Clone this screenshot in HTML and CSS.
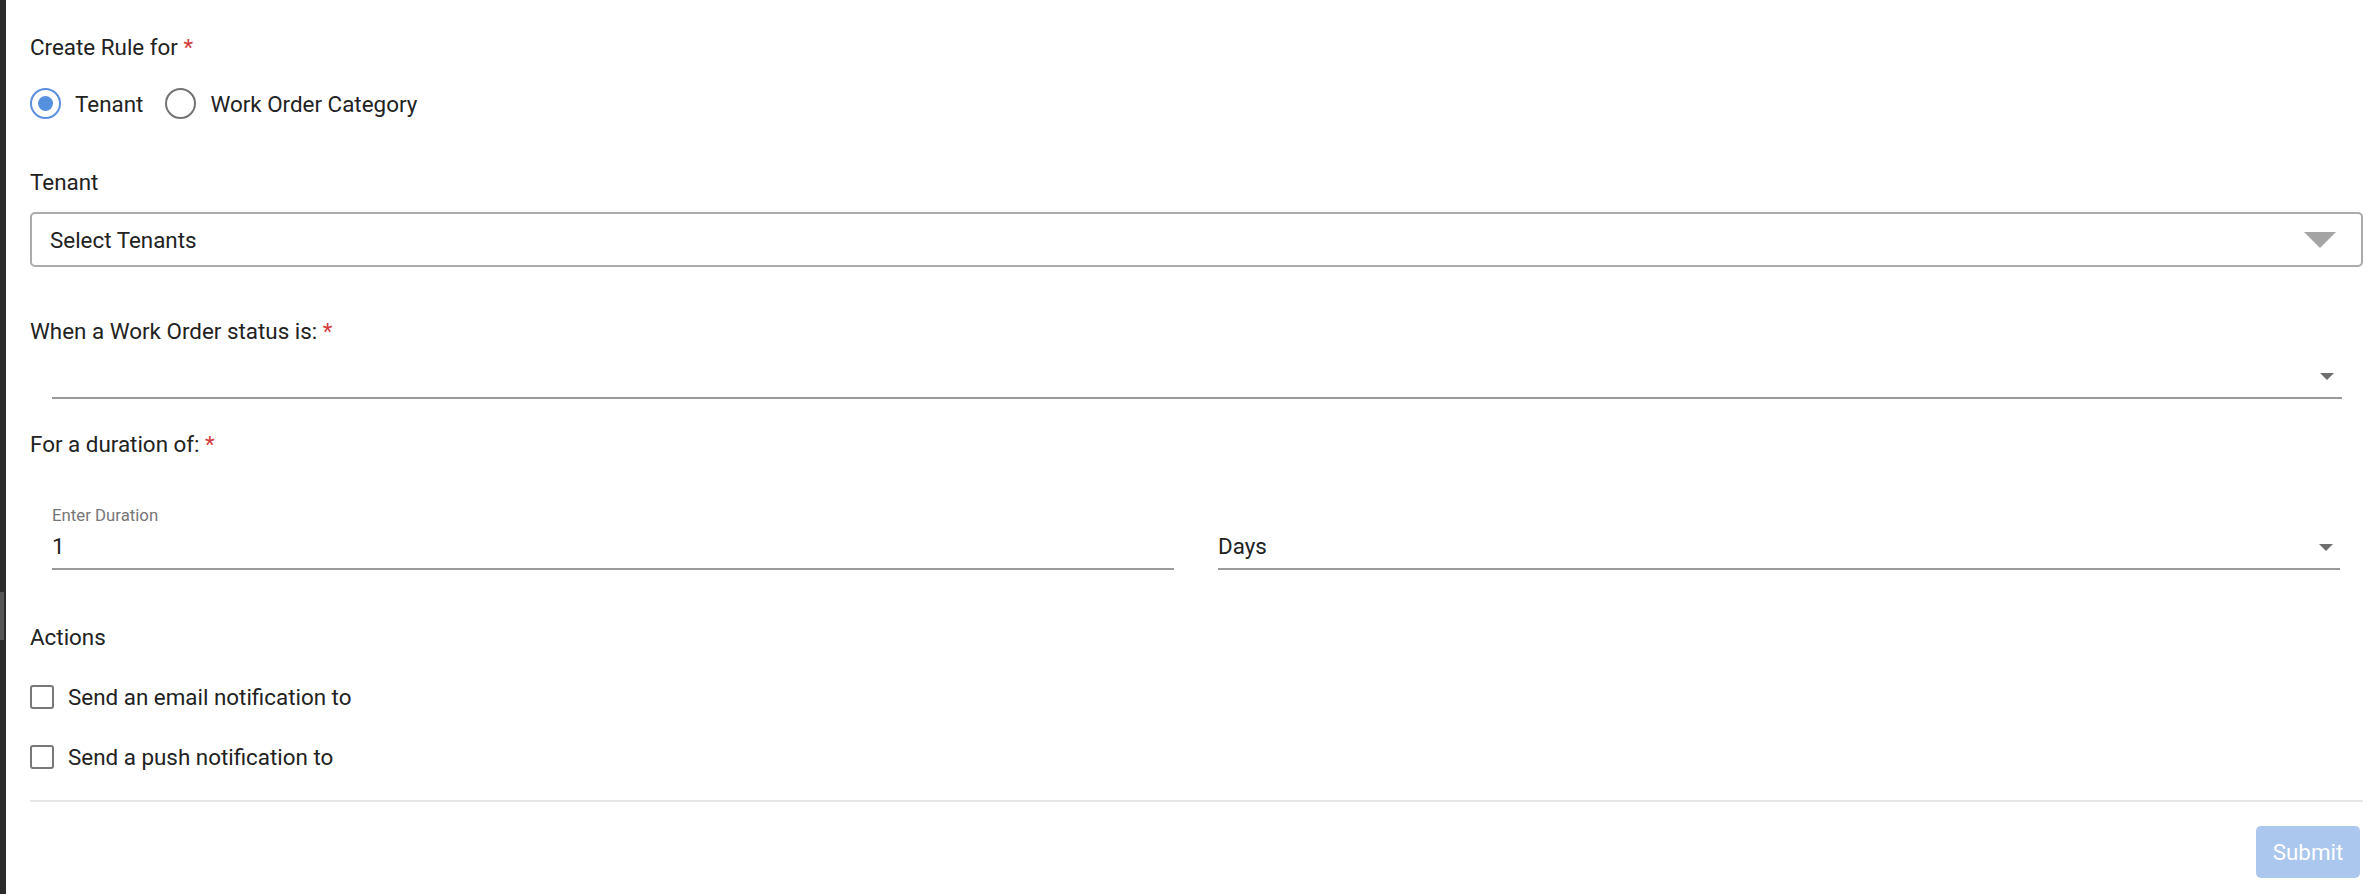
FILE: index.html
```html
<!DOCTYPE html>
<html lang="en">
<head>
<meta charset="utf-8">
<title>Create Rule</title>
<link rel="stylesheet" href="styles.css">
</head>
<body>
<div class="page">
  <aside class="strip"><div class="thumb"></div></aside>
  <main class="form">
    <div class="label">Create Rule for <span class="req">*</span></div>
    <div class="radio-row">
      <label class="radio-opt"><span class="radio checked"></span><span>Tenant</span></label>
      <label class="radio-opt"><span class="radio"></span><span>Work Order Category</span></label>
    </div>

    <div class="label sec-tenant">Tenant</div>
    <div class="select-box">
      <span>Select Tenants</span>
      <span class="tri-big"></span>
    </div>

    <div class="label sec-when">When a Work Order status is: <span class="req">*</span></div>
    <div class="under-field status-field">
      <span class="tri-small"></span>
    </div>

    <div class="label sec-dur">For a duration of: <span class="req">*</span></div>
    <div class="dur-row">
      <div class="under-field dur-field">
        <div class="small-label">Enter Duration</div>
        <div class="value">1</div>
      </div>
      <div class="under-field dur-field days-field">
        <div class="value">Days</div>
        <span class="tri-small"></span>
      </div>
    </div>

    <div class="label sec-actions">Actions</div>
    <label class="check-row first"><span class="checkbox"></span><span>Send an email notification to</span></label>
    <label class="check-row"><span class="checkbox"></span><span>Send a push notification to</span></label>

    <div class="divider"></div>
    <div class="footer">
      <button class="submit" type="button">Submit</button>
    </div>
  </main>
</div>
</body>
</html>
```

FILE: styles.css
```css
* { box-sizing: border-box; }
html, body { margin: 0; padding: 0; background: #fff; }
body {
  font-family: Roboto, "Liberation Sans", Arial, sans-serif;
  font-size: 22.4px;
  line-height: 26px;
  color: #222;
}
.page { display: flex; min-height: 894px; }
.strip { width: 6px; background: #2b2b2b; padding-top: 592px; flex: none; }
.thumb { width: 4px; height: 48px; background: #555; }

.form { flex: 1; padding: 34px 13px 0 24px; }

.label { height: 26px; }
.req { color: #d23c3c; }

.radio-row { display: flex; margin-top: 28px; height: 31px; align-items: center; gap: 22px; }
.radio-opt { display: flex; align-items: center; gap: 14px; }
.radio {
  width: 31px; height: 31px; border-radius: 50%;
  border: 2px solid #737373;
  display: flex; align-items: center; justify-content: center;
}
.radio.checked { border-color: #5a8fdf; }
.radio.checked::after {
  content: ""; width: 15px; height: 15px; border-radius: 50%; background: #5590df;
}

.sec-tenant { margin-top: 50px; }
.select-box {
  margin-top: 17px; height: 55px;
  border: 2px solid #ababab; border-radius: 5px;
  display: flex; align-items: center; justify-content: space-between;
  padding: 0 25px 0 18px;
}
.tri-big {
  width: 0; height: 0;
  border-left: 16px solid transparent; border-right: 16px solid transparent;
  border-top: 16px solid #a4a4a4;
}

.sec-when { margin-top: 51px; }
.under-field { border-bottom: 2px solid #9a9a9a; }
.status-field {
  margin: 0 21px 0 22px; height: 55px;
  display: flex; justify-content: flex-end; align-items: flex-end;
  padding: 0 8px 17px 0;
}
.tri-small {
  width: 0; height: 0;
  border-left: 7px solid transparent; border-right: 7px solid transparent;
  border-top: 7px solid #6f6f6f;
}

.sec-dur { margin-top: 32px; }
.dur-row {
  display: grid; grid-template-columns: 1fr 1fr; column-gap: 44px;
  padding: 0 23px 0 22px; margin-top: 49px;
}
.dur-field { padding-bottom: 9px; }
.small-label { font-size: 16.8px; line-height: 18px; color: #767676; margin-bottom: 9px; }
.days-field {
  display: flex; justify-content: space-between; align-items: flex-end;
  padding-right: 7px;
}
.days-field .tri-small { margin-bottom: 8px; }

.sec-actions { margin-top: 54px; }
.check-row { display: flex; align-items: center; gap: 14px; margin-top: 34px; height: 26px; }
.check-row.first { margin-top: 34px; }
.checkbox {
  width: 24px; height: 24px; border: 2px solid #787878; border-radius: 3px; flex: none;
}

.divider { margin-top: 30px; height: 2px; background: #e6e6e6; }
.footer { display: flex; justify-content: flex-end; padding: 24px 3px 0 0; }
.submit {
  width: 104px; height: 52px; border: none; border-radius: 5px;
  background: #abc7ed; color: #fff;
  font-family: Roboto, "Liberation Sans", Arial, sans-serif; font-size: 22.4px;
  padding: 0;
}
```
